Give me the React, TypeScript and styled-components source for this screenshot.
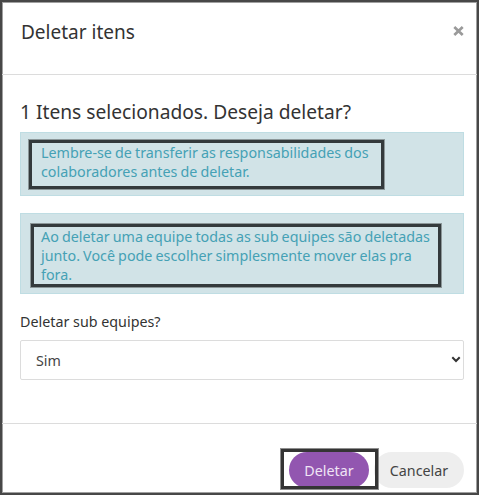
import styled, { createGlobalStyle } from "styled-components"

const GlobalStyle = createGlobalStyle`
  html, body {
    margin: 0;
    padding: 0;
    background: #fff;
  }
  body {
    font-family: "Noto Sans", "DejaVu Sans", sans-serif;
    color: #333;
  }
`

// Styles
const Frame = styled.div`
  box-sizing: border-box;
  width: 479px;
  height: 495px;
  border: 2px solid #474747;
  box-shadow: inset 0 0 0 1px #a0a0a0;
  background: #fff;
  display: flex;
  flex-direction: column;
`
const Header = styled.div`
  box-sizing: border-box;
  height: 73px;
  flex-shrink: 0;
  border-bottom: 1px solid #dcdcdc;
  display: flex;
  justify-content: space-between;
  align-items: flex-start;
  padding: 18px 13px 0 19px;
`
const Title = styled.h5`
  margin: 0;
  font-size: 19px;
  font-weight: 400;
  line-height: 24px;
  color: #333;
`
const CloseBtn = styled.button`
  border: none;
  background: none;
  padding: 0;
  margin-top: 6px;
  width: 11px;
  height: 10px;
  display: flex;
  cursor: pointer;
`
const Body = styled.div`
  flex: 1;
  padding: 25px 13px 0 18px;
`
const Question = styled.h4`
  margin: 0 0 8px;
  font-size: 19.2px;
  font-weight: 400;
  line-height: 24px;
  color: #333;
`
const Alert = styled.div<{ $pad: string }>`
  background: #d1e3e7;
  border: 1px solid #bfdde3;
  padding: ${props => props.$pad};
  margin-bottom: 17px;
`
const AlertText = styled.p<{ $pad: string }>`
  display: inline-block;
  margin: 0;
  border: 3px solid #343a3c;
  box-shadow: 0 0 0 1px #8c9799;
  padding: ${props => props.$pad};
  font-size: 14.3px;
  line-height: 19.3px;
  word-spacing: -0.6px;
  white-space: nowrap;
  color: #45a1b5;
`
const Label = styled.label`
  display: block;
  font-size: 14.3px;
  line-height: 21px;
  margin: 13px 0 8px;
  color: #333;
`
const SelectWrap = styled.div`
  position: relative;
`
const Select = styled.select`
  appearance: none;
  box-sizing: border-box;
  width: 100%;
  height: 40px;
  border: 1px solid #dcdcdc;
  border-radius: 2px;
  background: #fff;
  padding: 0 15px;
  font-family: inherit;
  font-size: 14.3px;
  color: #444;
`
const Chevron = styled.svg`
  position: absolute;
  right: 3px;
  top: 16px;
  pointer-events: none;
`
const Footer = styled.div`
  box-sizing: border-box;
  height: 70px;
  flex-shrink: 0;
  border-top: 1px solid #dcdcdc;
  display: flex;
  justify-content: flex-end;
  align-items: flex-start;
  gap: 5px;
  padding: 28px 13px 0;
`
const Focused = styled.span`
  position: relative;
  display: inline-flex;
  &::after {
    content: "";
    position: absolute;
    z-index: 1;
    top: -3px;
    bottom: -1px;
    left: -8px;
    right: -9px;
    border: 3px solid #343434;
    box-shadow: 0 0 0 1px #8e8e8e;
    pointer-events: none;
  }
`
const Btn = styled.button<{ $primary?: boolean }>`
  height: 36px;
  border: none;
  border-radius: 18px;
  padding: 0;
  font-family: inherit;
  font-size: 14.3px;
  cursor: pointer;
  background: ${props => props.$primary ? '#9256b0' : '#eeeeee'};
  color: ${props => props.$primary ? '#efe4f5' : '#444'};
  width: ${props => props.$primary ? '80px' : '90px'};
`

const App: React.FC = () => {
  return (
    <>
      <GlobalStyle />
      <Frame>
        <Header>
          <Title>Deletar itens</Title>
          <CloseBtn aria-label="Fechar">
            <svg width="11" height="10" viewBox="0 0 11 10">
              <path d="M1.3 1 L9.7 9 M9.7 1 L1.3 9" stroke="#9a9a9a" strokeWidth="2.7" />
            </svg>
          </CloseBtn>
        </Header>
        <Body>
          <Question>1 Itens selecionados. Deseja deletar?</Question>
          <Alert $pad="7px 8px 6px">
            <AlertText $pad="0 12px 4px 9px">
              Lembre-se de transferir as responsabilidades dos<br />
              colaboradores antes de deletar.
            </AlertText>
          </Alert>
          <Alert $pad="10px 10px 6px">
            <AlertText $pad="0 8px 0 7px">
              Ao deletar uma equipe todas as sub equipes são deletadas<br />
              junto. Você pode escolher simplesmente mover elas pra<br />
              fora.
            </AlertText>
          </Alert>
          <Label>Deletar sub equipes?</Label>
          <SelectWrap>
            <Select defaultValue="sim">
              <option value="sim">Sim</option>
              <option value="nao">Não</option>
            </Select>
            <Chevron width="10" height="7" viewBox="0 0 10 7">
              <path d="M1.3 1.3 L5 5 L8.7 1.3" fill="none" stroke="#333" strokeWidth="2" />
            </Chevron>
          </SelectWrap>
        </Body>
        <Footer>
          <Focused>
            <Btn $primary>Deletar</Btn>
          </Focused>
          <Btn>Cancelar</Btn>
        </Footer>
      </Frame>
    </>
  )
}

export default App
